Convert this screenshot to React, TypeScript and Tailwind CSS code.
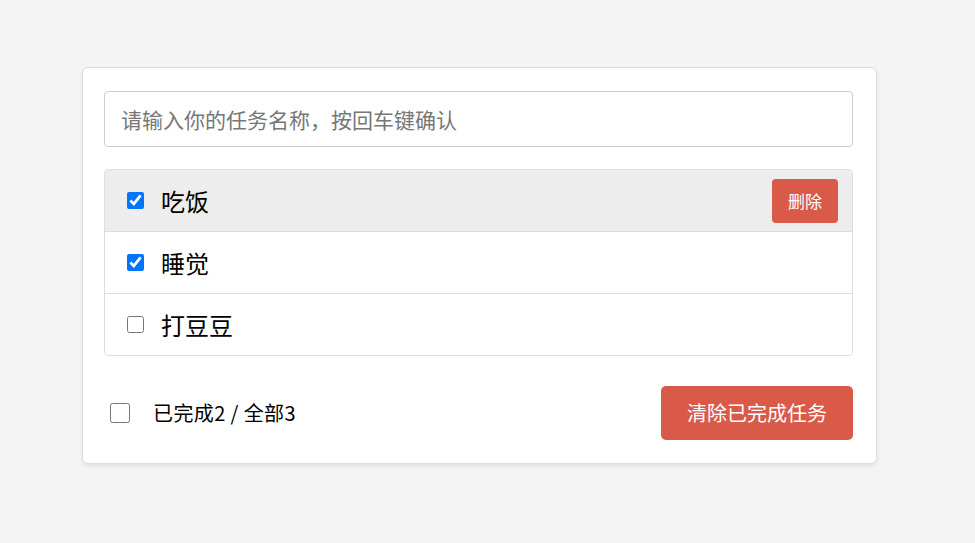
import { useState } from 'react'

type Todo = { id: number; name: string; done: boolean }

const initialTodos: Todo[] = [
  { id: 1, name: '吃饭', done: true },
  { id: 2, name: '睡觉', done: true },
  { id: 3, name: '打豆豆', done: false },
]

export default function App() {
  const [todos, setTodos] = useState<Todo[]>(initialTodos)
  const [hovered, setHovered] = useState<number | null>(1)
  const [text, setText] = useState('')

  const doneCount = todos.filter((t) => t.done).length

  const toggle = (id: number) => {
    setTodos(todos.map((t) => (t.id === id ? { ...t, done: !t.done } : t)))
  }

  const remove = (id: number) => {
    setTodos(todos.filter((t) => t.id !== id))
  }

  const handleKey = (e: React.KeyboardEvent<HTMLInputElement>) => {
    if (e.key !== 'Enter' || !text.trim()) return
    setTodos([...todos, { id: Date.now(), name: text.trim(), done: false }])
    setText('')
  }

  return (
    <div
      className="min-h-screen bg-[#f4f4f4] pr-[16px] pt-[67px]"
      style={{ fontFamily: '"Noto Sans CJK SC", "Noto Sans", sans-serif' }}
    >
      <div className="mx-auto w-[795px] rounded-[6px] border border-[#dddddd] bg-white pl-[21px] pr-[23px] pt-[23px] pb-[23px] shadow-[0_2px_4px_rgba(0,0,0,0.08)]">
        {/* Header input */}
        <input
          type="text"
          value={text}
          onChange={(e) => setText(e.target.value)}
          onKeyDown={handleKey}
          placeholder="请输入你的任务名称，按回车键确认"
          className="block h-[56px] w-full rounded-[4px] border border-[#cccccc] px-[16px] text-[21px] text-[#333] placeholder:text-[#777777] focus:outline-none"
        />

        {/* List */}
        <ul className="mt-[22px] overflow-hidden rounded-[4px] border border-[#dddddd]">
          {todos.map((todo) => (
            <li
              key={todo.id}
              onMouseEnter={() => setHovered(todo.id)}
              className={`flex h-[62px] items-center border-b border-[#dddddd] pl-[22px] pr-[14px] last:h-[61px] last:border-b-0 ${
                hovered === todo.id ? 'bg-[#ededed]' : 'bg-white'
              }`}
            >
              <input
                type="checkbox"
                checked={todo.done}
                onChange={() => toggle(todo.id)}
                className="h-[17px] w-[17px] accent-[#0075ff]"
              />
              <span className="ml-[17px] text-[24px] leading-none text-black">{todo.name}</span>
              {hovered === todo.id && (
                <button
                  onClick={() => remove(todo.id)}
                  className="ml-auto h-[44px] w-[66px] rounded-[4px] bg-[#da5a49] text-[17px] text-white"
                >
                  删除
                </button>
              )}
            </li>
          ))}
        </ul>

        {/* Footer */}
        <div className="mt-[30px] flex items-center">
          <input
            type="checkbox"
            checked={todos.length > 0 && doneCount === todos.length}
            onChange={(e) => setTodos(todos.map((t) => ({ ...t, done: e.target.checked })))}
            className="ml-[6px] h-[20px] w-[20px]"
          />
          <span className="ml-[23px] text-[20px] tracking-[0.4px] text-black">
            已完成{doneCount} / 全部{todos.length}
          </span>
          <button
            onClick={() => setTodos(todos.filter((t) => !t.done))}
            className="ml-auto h-[54px] w-[192px] rounded-[5px] bg-[#da5a49] text-[20px] text-white"
          >
            清除已完成任务
          </button>
        </div>
      </div>
    </div>
  )
}
